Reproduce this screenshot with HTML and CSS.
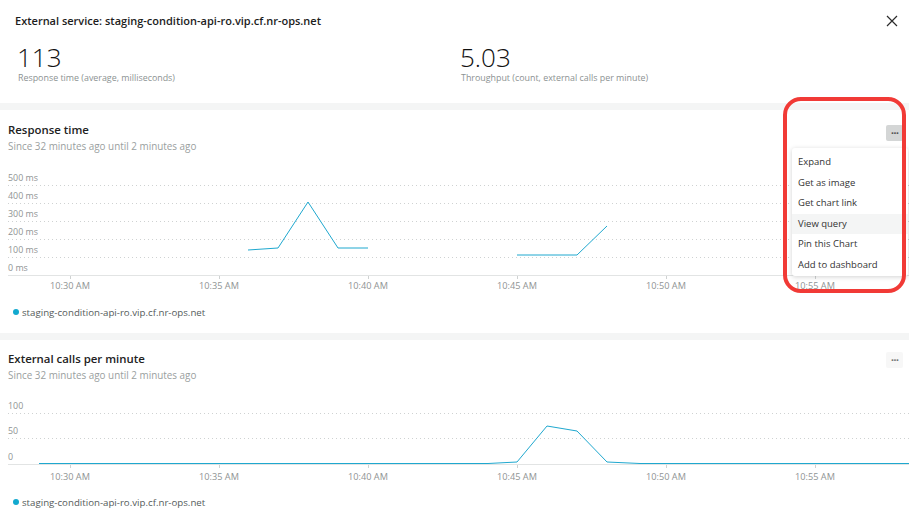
FILE: index.html
```html
<!DOCTYPE html>
<html>
<head>
<meta charset="utf-8">
<link rel="stylesheet" href="styles.css">
</head>
<body>
<div class="page">
  <header class="header">
    <div class="title-row">
      <h1 class="title">External service: staging-condition-api-ro.vip.cf.nr-ops.net</h1>
      <button class="close" aria-label="Close">
        <svg width="12" height="12" viewBox="0 0 12 12"><path d="M1 1 L11 11 M11 1 L1 11" stroke="#2b2b2b" stroke-width="1.2" fill="none"/></svg>
      </button>
    </div>
    <div class="metrics">
      <div class="metric">
        <div class="metric-value">113</div>
        <div class="metric-label">Response time (average, milliseconds)</div>
      </div>
      <div class="metric">
        <div class="metric-value">5.03</div>
        <div class="metric-label">Throughput (count, external calls per minute)</div>
      </div>
    </div>
  </header>

  <section class="panel panel-one">
    <h2 class="panel-title">Response time</h2>
    <div class="panel-sub">Since 32 minutes ago until 2 minutes ago</div>
    <button class="more more-active">···</button>
    <svg class="chart chart-one" width="909" height="127" viewBox="0 168 909 127">
      <g class="ylabels">
        <text x="8" y="180.5">500 ms</text>
        <text x="8" y="198.5">400 ms</text>
        <text x="8" y="216.5">300 ms</text>
        <text x="8" y="234.5">200 ms</text>
        <text x="8" y="252.5">100 ms</text>
        <text x="8" y="270.5">0 ms</text>
      </g>
      <g class="grid">
        <line x1="8" y1="185.5" x2="909" y2="185.5"/>
        <line x1="8" y1="203.5" x2="909" y2="203.5"/>
        <line x1="8" y1="221.5" x2="909" y2="221.5"/>
        <line x1="8" y1="239.5" x2="909" y2="239.5"/>
        <line x1="8" y1="257.5" x2="909" y2="257.5"/>
      </g>
      <line class="axis" x1="8" y1="275.5" x2="909" y2="275.5"/>
      <g class="ticks">
        <line x1="70.5" y1="276" x2="70.5" y2="279"/>
        <line x1="219.5" y1="276" x2="219.5" y2="279"/>
        <line x1="368.5" y1="276" x2="368.5" y2="279"/>
        <line x1="517.5" y1="276" x2="517.5" y2="279"/>
        <line x1="666.5" y1="276" x2="666.5" y2="279"/>
        <line x1="815.5" y1="276" x2="815.5" y2="279"/>
      </g>
      <g class="xlabels">
        <text x="70" y="288.5">10:30 AM</text>
        <text x="219" y="288.5">10:35 AM</text>
        <text x="368" y="288.5">10:40 AM</text>
        <text x="517" y="288.5">10:45 AM</text>
        <text x="666" y="288.5">10:50 AM</text>
        <text x="815" y="288.5">10:55 AM</text>
      </g>
      <polyline class="series" points="248,250 278,248 308,202 338,248 368,248"/>
      <polyline class="series" points="517,255 577,255 607,226"/>
    </svg>
    <div class="legend"><span class="dot"></span>staging-condition-api-ro.vip.cf.nr-ops.net</div>

    <ul class="menu">
      <li>Expand</li>
      <li>Get as image</li>
      <li>Get chart link</li>
      <li class="hover">View query</li>
      <li>Pin this Chart</li>
      <li>Add to dashboard</li>
    </ul>
  </section>

  <section class="panel panel-two">
    <h2 class="panel-title">External calls per minute</h2>
    <div class="panel-sub">Since 32 minutes ago until 2 minutes ago</div>
    <button class="more">···</button>
    <svg class="chart chart-two" width="909" height="90" viewBox="0 395 909 90">
      <g class="ylabels">
        <text x="8" y="408.5">100</text>
        <text x="8" y="434">50</text>
        <text x="8" y="460">0</text>
      </g>
      <g class="grid">
        <line x1="8" y1="413.5" x2="909" y2="413.5"/>
        <line x1="8" y1="438.5" x2="909" y2="438.5"/>
      </g>
      <line class="axis" x1="8" y1="464.5" x2="909" y2="464.5"/>
      <g class="ticks">
        <line x1="70.5" y1="465" x2="70.5" y2="468"/>
        <line x1="219.5" y1="465" x2="219.5" y2="468"/>
        <line x1="368.5" y1="465" x2="368.5" y2="468"/>
        <line x1="517.5" y1="465" x2="517.5" y2="468"/>
        <line x1="666.5" y1="465" x2="666.5" y2="468"/>
        <line x1="815.5" y1="465" x2="815.5" y2="468"/>
      </g>
      <g class="xlabels">
        <text x="70" y="479.5">10:30 AM</text>
        <text x="219" y="479.5">10:35 AM</text>
        <text x="368" y="479.5">10:40 AM</text>
        <text x="517" y="479.5">10:45 AM</text>
        <text x="666" y="479.5">10:50 AM</text>
        <text x="815" y="479.5">10:55 AM</text>
      </g>
      <polyline class="series" points="39,463.5 488,463.5 517,462 547,426 577,431 607,462 640,463.5 909,463.5"/>
    </svg>
    <div class="legend"><span class="dot"></span>staging-condition-api-ro.vip.cf.nr-ops.net</div>
  </section>

  <div class="highlight-ring"></div>
</div>
</body>
</html>
```

FILE: styles.css
```css
* { box-sizing: border-box; }
html, body { margin: 0; padding: 0; }
body {
  width: 909px;
  height: 518px;
  overflow: hidden;
  background: #f4f5f5;
  font-family: "Open Sans", "Noto Sans", sans-serif;
  color: #2a2a2a;
}
.page { position: relative; width: 909px; height: 518px; }

.header {
  background: #fff;
  height: 103px;
  padding: 13px 0 0 0;
}
.title-row {
  display: flex;
  align-items: center;
  justify-content: space-between;
  padding: 0 11px 0 15px;
  height: 16px;
}
.title {
  margin: 0;
  font-size: 11px;
  font-weight: 600;
  line-height: 16px;
  color: #1d1d1d;
}
.close {
  border: 0;
  background: none;
  padding: 0;
  width: 12px;
  height: 12px;
  display: flex;
}
.metrics {
  display: grid;
  grid-template-columns: 443px 1fr;
  padding: 0 0 0 18px;
  margin-top: 12.5px;
}
.metric-value {
  font-size: 26px;
  font-weight: 300;
  line-height: 30px;
  color: #111;
  margin-left: -1px;
}
.metric-label {
  font-size: 8.9px;
  line-height: 11px;
  color: #8c9292;
}

.panel {
  position: relative;
  background: #fff;
}
.panel-one { margin-top: 7px; height: 223px; padding-top: 13px; }
.panel-two { margin-top: 7px; height: 178px; padding-top: 12px; }

.panel-title {
  margin: 0;
  padding-left: 8px;
  font-size: 11.4px;
  font-weight: 600;
  line-height: 14px;
  color: #222;
}
.panel-sub {
  padding-left: 8px;
  margin-top: 2.5px;
  font-size: 9.9px;
  line-height: 13px;
  color: #9aa0a0;
}
.chart { display: block; }
.chart-one { margin-top: 15.5px; }
.chart-two { margin-top: 13.5px; }

.ylabels text {
  font-family: "Open Sans", sans-serif;
  font-size: 8.9px;
  fill: #8f9494;
}
.xlabels text {
  font-family: "Open Sans", sans-serif;
  font-size: 9.2px;
  fill: #8f9494;
  text-anchor: middle;
}
.grid line {
  stroke: #cfd2d2;
  stroke-width: 1;
  stroke-dasharray: 1 3;
}
.axis { stroke: #e2e4e4; stroke-width: 1; }
.ticks line { stroke: #cfd2d2; stroke-width: 1; }
.series {
  fill: none;
  stroke: #1fa8cf;
  stroke-width: 1;
  stroke-linejoin: round;
}

.legend {
  display: flex;
  align-items: center;
  padding-left: 13px;
  font-size: 9.7px;
  line-height: 13px;
  color: #555b5b;
}
.panel-one .legend { margin-top: 10.5px; }
.panel-two .legend { margin-top: 10.5px; }
.dot {
  width: 6px;
  height: 6px;
  border-radius: 50%;
  background: #12a9cf;
  margin-right: 3px;
}

.more {
  position: absolute;
  right: 6px;
  width: 17px;
  height: 16px;
  border: 0;
  border-radius: 2px;
  padding: 0;
  font-size: 9px;
  line-height: 16px;
  font-weight: 700;
  letter-spacing: -1px;
  color: #777;
  background: #f7f7f7;
  font-family: "DejaVu Sans", sans-serif;
}
.panel-one .more { top: 15px; }
.panel-two .more { top: 12px; }
.more-active { background: #d4d6d6; color: #555; }

.menu {
  position: absolute;
  left: 792px;
  top: 38px;
  width: 116px;
  margin: 0;
  padding: 4px 0 1px 0;
  list-style: none;
  background: #fff;
  border-radius: 3px;
  box-shadow: 0 1px 5px rgba(0,0,0,0.18);
}
.menu li {
  height: 20.5px;
  line-height: 20.5px;
  padding-left: 6px;
  font-size: 9.5px;
  color: #333;
}
.menu li.hover { background: #f4f5f5; }

.highlight-ring {
  position: absolute;
  left: 783px;
  top: 97px;
  width: 123px;
  height: 196px;
  border: 4px solid #f13a36;
  border-radius: 18px;
}
```
